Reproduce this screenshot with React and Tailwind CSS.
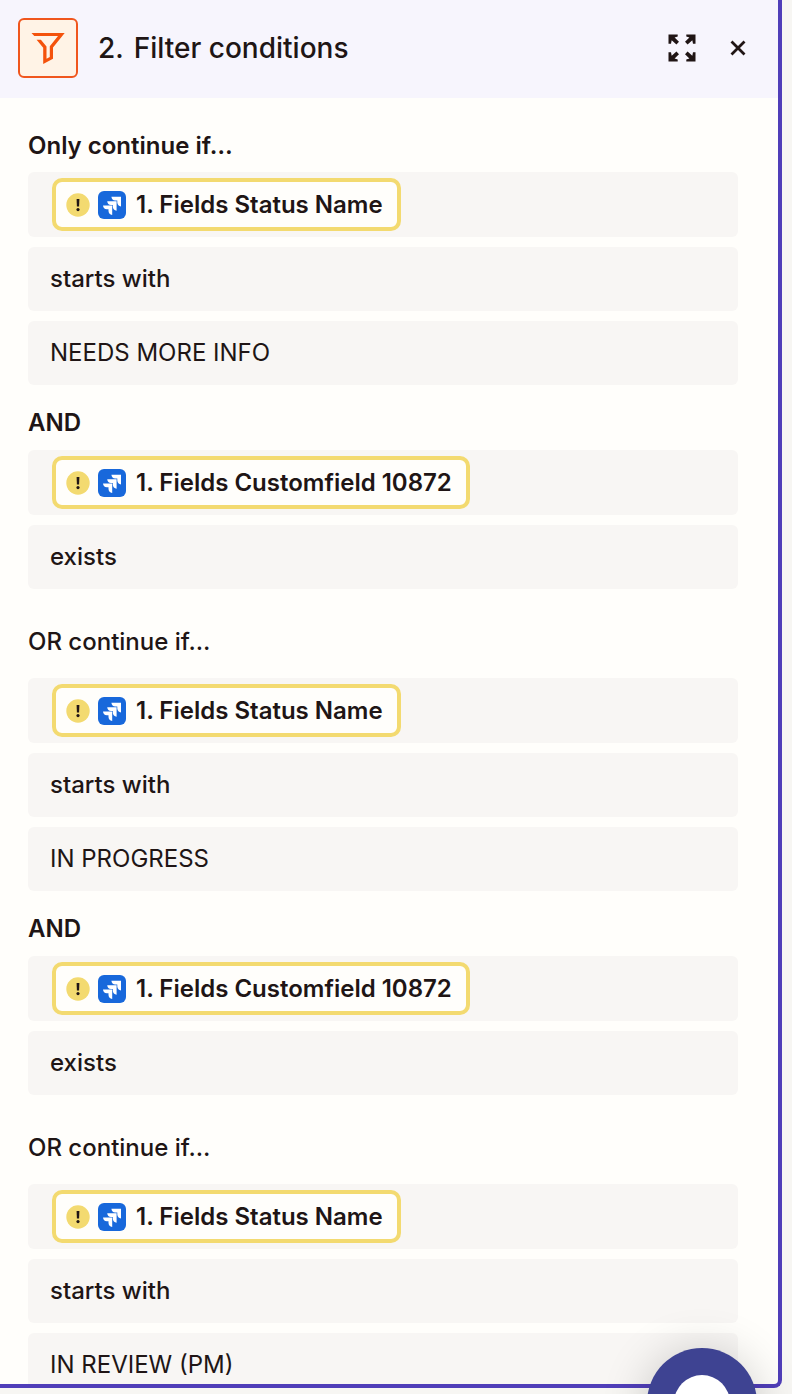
const GROUPS = [
  {
    title: "Only continue if…",
    value: "NEEDS MORE INFO",
    and: true,
  },
  { title: "OR continue if…", value: "IN PROGRESS", and: true },
  { title: "OR continue if…", value: "IN REVIEW (PM)", and: false },
];

function FilterIcon() {
  return (
    <svg viewBox="0 0 34 34" className="size-[34px]" fill="none" aria-hidden="true">
      <path
        d="M0.5 2H33.700L22 16.500V27.800L12.200 33V16.800L5.600 8.800H9.900L15.500 15.600V27.800L18.800 26V15.300L27 5H3.300Z"
        fill="#f4520c"
      />
    </svg>
  );
}

function ExpandIcon() {
  return (
    <svg viewBox="0 0 28 28" className="size-7" fill="#201515" aria-hidden="true">
      <path id="arrow" d="M0.500 0.500H9.700V2.600L6.600 3.400L11 7.800L8.400 10.400L3.700 6.200L3 9.700H0.500Z" />
      <use href="#arrow" transform="translate(28 0) scale(-1 1)" />
      <use href="#arrow" transform="translate(0 28) scale(1 -1)" />
      <use href="#arrow" transform="translate(28 28) scale(-1 -1)" />
    </svg>
  );
}

function JiraIcon() {
  return (
    <svg viewBox="0 0 28 28" className="size-7 shrink-0" aria-hidden="true">
      <rect width="28" height="28" rx="6" fill="#1868db" />
      <g fill="#fff">
        <path d="M13.400 5.800H23V15.600C20.800 15.300 19.500 13.800 19.300 11.600V9.500H17.200C15 9.400 13.600 8 13.400 5.800Z" />
        <path d="M9.200 10.200H18.600V19.800C16.400 19.500 14.900 18 14.800 15.800V14H13C10.800 13.900 9.400 12.400 9.200 10.200Z" />
        <path d="M5 14.600H14.200V24C12 23.700 10.600 22.200 10.500 20V18.300H8.800C6.600 18.200 5.200 16.800 5 14.600Z" />
      </g>
    </svg>
  );
}

function WarningIcon() {
  return (
    <svg viewBox="0 0 24 24" className="size-6 shrink-0" aria-hidden="true">
      <circle cx="12" cy="12" r="11.700" fill="#f3da70" />
      <path d="M10.600 6H13.400L13.100 13.600H10.900Z" fill="#201515" />
      <circle cx="12" cy="16.600" r="1.600" fill="#201515" />
    </svg>
  );
}

function TokenField({ children }) {
  return (
    <div className="flex h-[65px] items-center rounded-md bg-[#f8f6f4] px-6">
      <span className="flex h-[53px] items-center rounded-[10px] border-4 border-[#f3da70] bg-[#fffefb] pr-3.5 pl-2.5 text-2xl font-semibold whitespace-nowrap">
        <WarningIcon />
        <span className="mr-2.5 ml-2 flex">
          <JiraIcon />
        </span>
        {children}
      </span>
    </div>
  );
}

function OperatorField({ value }) {
  return (
    <select
      aria-label="Condition"
      defaultValue={value}
      className="h-16 w-full appearance-none rounded-md bg-[#f8f6f4] px-[22px] text-2xl font-medium"
    >
      <option>{value}</option>
    </select>
  );
}

function ConditionGroup({ title, value, and, first }) {
  return (
    <section>
      <h2
        className={
          first
            ? "pt-[33px] pb-[11px] text-2xl/[30px] font-semibold"
            : "pt-[38px] pb-[21px] text-2xl/[30px] font-medium"
        }
      >
        {title}
      </h2>
      <div className="flex flex-col gap-2.5">
        <TokenField>1. Fields Status Name</TokenField>
        <OperatorField value="starts with" />
        <input
          aria-label="Value"
          defaultValue={value}
          className="h-16 w-full rounded-md bg-[#f8f6f4] px-[22px] pb-0.5 text-2xl"
        />
      </div>
      {and && (
        <>
          <h3 className="pt-[23px] pb-3 text-2xl/[30px] font-semibold">AND</h3>
          <div className="flex flex-col gap-2.5">
            <TokenField>1. Fields Customfield 10872</TokenField>
            <OperatorField value="exists" />
          </div>
        </>
      )}
    </section>
  );
}

export default function App() {
  return (
    <div className="relative h-screen overflow-hidden bg-[#f7f6f3] pr-2.5 pb-1.5 font-['Inter',sans-serif] text-[#201515]">
      <main className="flex h-full flex-col overflow-hidden rounded-br-lg border-r-4 border-b-4 border-[#503eb9] bg-[#fffefb]">
        <header className="flex shrink-0 items-center bg-[#f7f5fd] pt-[18px] pr-7 pb-5 pl-[18px]">
          <span className="flex size-[60px] items-center justify-center rounded-md border-2 border-[#f0561d] bg-[#fff3e6]">
            <FilterIcon />
          </span>
          <h1 className="ml-5 flex gap-2.5 text-[28px]/[34px] font-medium">
            <span>2.</span>
            <span>Filter conditions</span>
          </h1>
          <button aria-label="Expand" className="mr-[30px] ml-auto">
            <ExpandIcon />
          </button>
          <button aria-label="Close" className="flex size-6 items-center justify-center">
            <svg viewBox="0 0 16 16" className="size-4" aria-hidden="true">
              <path d="M1.500 1.500L14.500 14.500M14.500 1.500L1.500 14.500" stroke="#201515" strokeWidth="2.800" />
            </svg>
          </button>
        </header>
        <div className="min-h-0 flex-1 overflow-hidden pr-10 pl-7">
          {GROUPS.map((group, index) => (
            <ConditionGroup key={index} first={index === 0} {...group} />
          ))}
        </div>
      </main>
      <button
        aria-label="Open chat"
        className="absolute right-[35px] -bottom-16 flex size-[110px] items-center justify-center rounded-full bg-[#3e4392] shadow-[0_4px_48px_rgba(0,0,0,0.2)]"
      >
        <span className="size-14 rounded-full bg-white" />
      </button>
    </div>
  );
}
